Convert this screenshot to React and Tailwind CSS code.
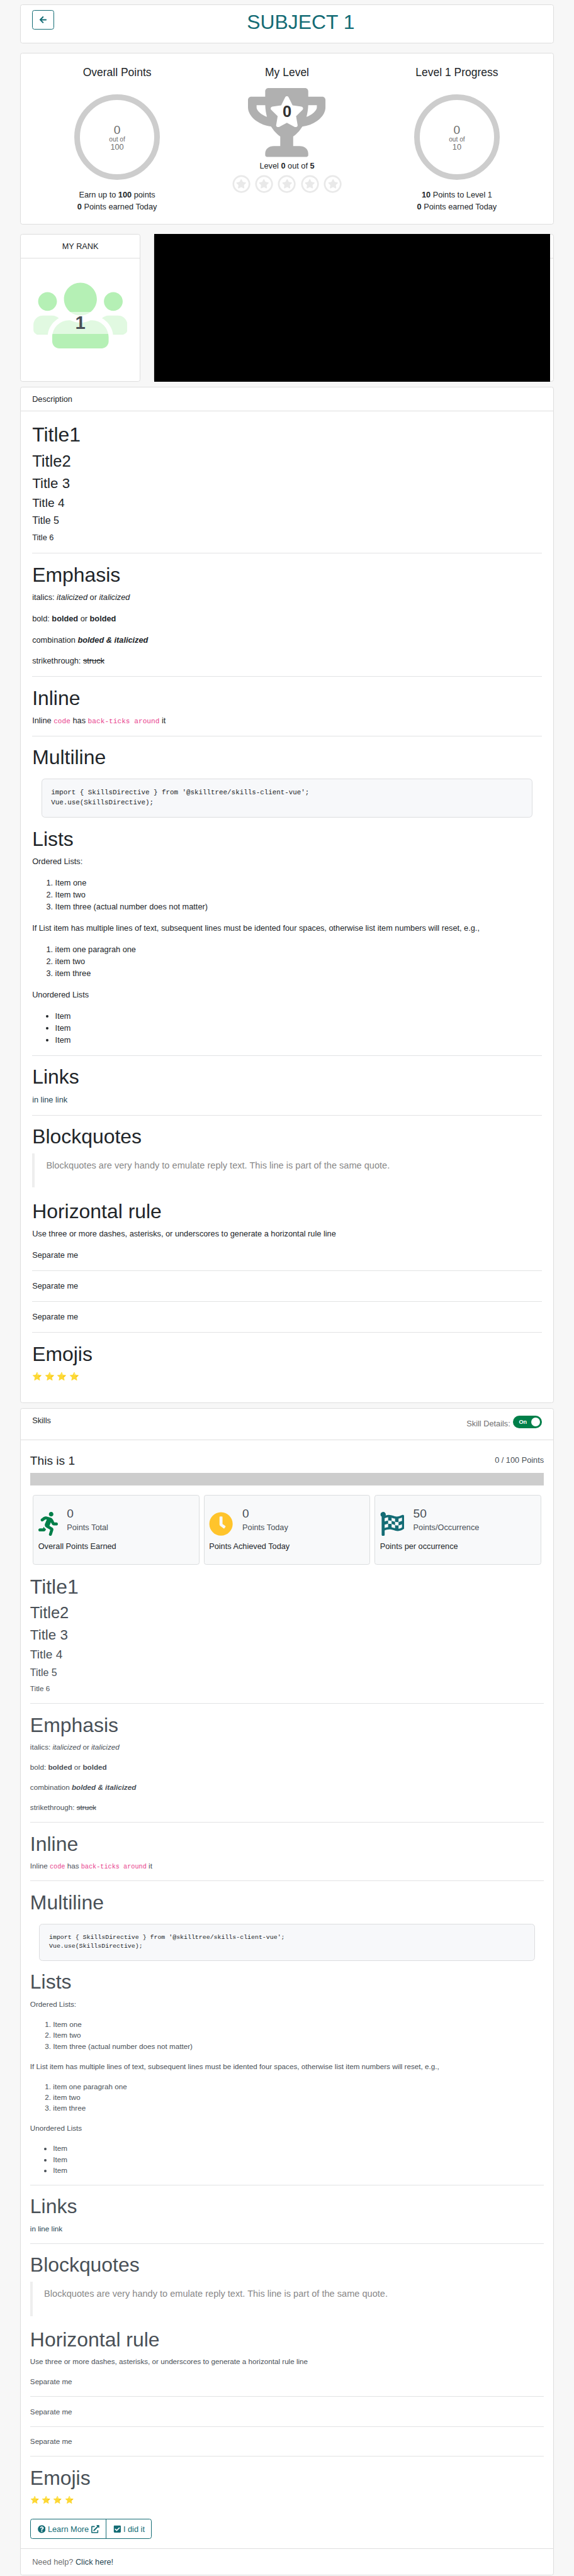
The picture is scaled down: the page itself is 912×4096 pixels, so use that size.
import React from "react";
import {
  FaArrowLeft,
  FaTrophy,
  FaStar,
  FaRegCircle,
  FaUsers,
  FaRunning,
  FaClock,
  FaFlagCheckered,
  FaQuestionCircle,
  FaExternalLinkAlt,
  FaCheckSquare,
} from "react-icons/fa";

const card = "box-border rounded-[4px] border border-[#dedede] bg-white";

function Heading({ children }) {
  return <h1 className="mb-[8px] text-[35px] leading-[42px]">{children}</h1>;
}

function Rule() {
  return <hr className="my-[16px] h-px border-0 bg-[#e2e3e4]" />;
}

function P({ children }) {
  return <p className="mb-[16px]">{children}</p>;
}

function Code({ children }) {
  return (
    <code className="font-['Liberation_Mono',monospace] text-[0.875em] leading-none text-[#e83e8c]">
      {children}
    </code>
  );
}

function Markdown({ small }) {
  return (
    <div
      className={
        small
          ? "text-[12.8px] leading-[19.03px] text-[#495057]"
          : "text-[14px] leading-[21px] text-[#212529]"
      }
    >
      <Heading>Title1</Heading>
      <h2 className="mb-[8px] text-[28px] leading-[33.6px]">Title2</h2>
      <h3 className="mb-[7px] text-[24.5px] leading-[29.4px]">Title 3</h3>
      <h4 className="mb-[7px] text-[21px] leading-[25.2px]">Title 4</h4>
      <h5 className="mb-[8.4px] text-[17.5px] leading-[21px]">Title 5</h5>
      <h6>Title 6</h6>
      <Rule />
      <Heading>Emphasis</Heading>
      <P>
        italics: <em>italicized</em> or <em>italicized</em>
      </P>
      <P>
        bold: <strong>bolded</strong> or <strong>bolded</strong>
      </P>
      <P>
        combination{" "}
        <strong>
          <em>bolded &amp; italicized</em>
        </strong>
      </P>
      <P>
        strikethrough: <del>struck</del>
      </P>
      <Rule />
      <Heading>Inline</Heading>
      <P>
        Inline <Code>code</Code> has <Code>back-ticks around</Code> it
      </P>
      <Rule />
      <Heading>Multiline</Heading>
      <pre className="m-[16px] rounded-[6px] border border-[#dcdddf] bg-[#f7f8fa] px-[16px] py-[15.7px] font-['Liberation_Mono',monospace] text-[0.85em] leading-[1.45] text-[#212529]">
        {"import { SkillsDirective } from '@skilltree/skills-client-vue';\nVue.use(SkillsDirective);"}
      </pre>
      <Heading>Lists</Heading>
      <P>Ordered Lists:</P>
      <ol className="mb-[16px] list-decimal pl-[40px]">
        <li>Item one</li>
        <li>Item two</li>
        <li>Item three (actual number does not matter)</li>
      </ol>
      <P>
        If List item has multiple lines of text, subsequent lines must be
        idented four spaces, otherwise list item numbers will reset, e.g.,
      </P>
      <ol className="mb-[16px] list-decimal pl-[40px]">
        <li>item one paragrah one</li>
        <li>item two</li>
        <li>item three</li>
      </ol>
      <P>Unordered Lists</P>
      <ul className="mb-[16px] list-disc pl-[40px]">
        <li>Item</li>
        <li>Item</li>
        <li>Item</li>
      </ul>
      <Rule />
      <Heading>Links</Heading>
      <P>
        <a className="text-[#264653]">in line link</a>
      </P>
      <Rule />
      <Heading>Blockquotes</Heading>
      <blockquote className="mb-[20px] border-l-[5px] border-[#eeeeee] px-[20px] py-[10px] text-[16px] leading-[24px] text-[#888888]">
        <p className="mb-[16px]">
          Blockquotes are very handy to emulate reply text. This line is part of
          the same quote.
        </p>
      </blockquote>
      <Heading>Horizontal rule</Heading>
      <P>
        Use three or more dashes, asterisks, or underscores to generate a
        horizontal rule line
      </P>
      <P>Separate me</P>
      <Rule />
      <P>Separate me</P>
      <Rule />
      <P>Separate me</P>
      <Rule />
      <Heading>Emojis</Heading>
      <p>⭐ ⭐ ⭐ ⭐</p>
    </div>
  );
}

function Ring({ total }) {
  return (
    <div className="mt-[26px] flex h-[150px] w-[150px] flex-col items-center justify-center rounded-full border-[10px] border-[#cdcdcd] pt-[2px] text-[#6f6f6f]">
      <span className="text-[21px] leading-[21px]">0</span>
      <span className="text-[11.2px] leading-[13px]">out of</span>
      <span className="text-[14px] leading-[14px]">{total}</span>
    </div>
  );
}

function Column({ title, children }) {
  return (
    <div className="flex w-[296px] flex-col items-center">
      <h2 className="text-[19.2px] leading-[23px]">{title}</h2>
      {children}
    </div>
  );
}

function Stat({ icon, value, unit, label }) {
  return (
    <div className="h-[122px] flex-1 rounded-[4px] border border-[#dbdddf] bg-[#f8f9fa] px-[8px] pt-[20px]">
      <div className="flex h-[58px] gap-[16px]">
        <div className="mt-[8px]">{icon}</div>
        <div className="text-[#495057]">
          <div className="text-[21px] leading-[25px]">{value}</div>
          <div>{unit}</div>
        </div>
      </div>
      <div>{label}</div>
    </div>
  );
}

export default function App() {
  return (
    <div className="h-[4096px] w-full overflow-hidden bg-[#f7f7f7]">
      <div className="w-[1000px] px-[35px] pt-[8px] font-['Liberation_Sans',Arial,sans-serif] text-[14px] leading-[21px] text-[#212529] [zoom:0.912]">
        <header className={`${card} flex h-[68px] px-[20px] pt-[8px]`}>
          <button className="mr-[10px] flex h-[35px] w-[38px] items-center justify-center rounded-[4px] border border-[#146c75] text-[#146c75]">
            <FaArrowLeft size={14} />
          </button>
          <h1 className="flex-1 text-center text-[35px] leading-[42px] text-[#146c75]">
            SUBJECT 1
          </h1>
        </header>

        <section className={`${card} mt-[16px] flex h-[300px] px-[20px] pt-[22px]`}>
          <Column title="Overall Points">
            <Ring total="100" />
            <p className="mt-[14.6px]">
              Earn up to <b>100</b> points
            </p>
            <p>
              <b>0</b> Points earned Today
            </p>
          </Column>
          <Column title="My Level">
            <div className="relative mt-[16px] h-[120px] w-[135px] text-[#b0b0b0]">
              <FaTrophy className="h-[120px] w-[135px]" />
              <div className="absolute left-[37px] top-[13.5px] text-white">
                <FaStar className="h-[54px] w-[61px]" />
              </div>
              <div className="absolute inset-x-0 top-[22px] text-center text-[28px] font-bold leading-[36px] text-[#333333]">
                0
              </div>
            </div>
            <p className="mt-[4.6px]">
              Level <b>0</b> out of <b>5</b>
            </p>
            <div className="mt-[5px] flex gap-[8px] text-[#e9e9e9]">
              {[1, 2, 3, 4, 5].map((n) => (
                <div key={n} className="relative h-[32px] w-[32px]">
                  <FaRegCircle className="h-[32px] w-[32px]" />
                  <div className="absolute inset-0 flex items-center justify-center">
                    <FaStar className="h-[16px] w-[18px]" />
                  </div>
                </div>
              ))}
            </div>
          </Column>
          <Column title="Level 1 Progress">
            <Ring total="10" />
            <p className="mt-[14.6px]">
              <b>10</b> Points to Level 1
            </p>
            <p>
              <b>0</b> Points earned Today
            </p>
          </Column>
        </section>

        <div className="mt-[16px] flex h-[258px] justify-between">
          <section className={`${card} w-[210px]`}>
            <h6 className="border-b border-[#dedede] py-[12px] text-center leading-[16.8px]">
              MY RANK
            </h6>
            <div className="relative pt-[34px]">
              <FaUsers className="mx-auto h-[131px] w-[164px] text-[#b5f0b5]" />
              <div className="absolute inset-x-0 top-[93px] bg-white/60 text-center text-[32px] font-bold leading-[38.4px] text-[#495057]">
                1
              </div>
            </div>
          </section>
          <section className={`${card} relative w-[697px]`}>
            <div className="h-[41.8px] border-b border-[#dedede]" />
            <div className="absolute -left-px -top-px h-[258px] w-[690px] bg-black" />
          </section>
        </div>

        <section className={`${card} mt-[8.4px] h-[1772.2px]`}>
          <h6 className="border-b border-[#dedede] px-[20px] py-[12px] leading-[16.8px]">
            Description
          </h6>
          <div className="px-[20px] pt-[20px]">
            <Markdown />
          </div>
        </section>

        <section className={`${card} mt-[8.6px] h-[2035px]`}>
          <div className="flex h-[55.2px] justify-between border-b border-[#dedede] px-[20px] pt-[12px]">
            <h6 className="leading-[16.8px]">Skills</h6>
            <div className="flex items-start gap-[5px]">
              <span className="pt-[3.5px] text-[#6f6f6f]">Skill Details:</span>
              <div className="flex h-[22px] w-[50px] items-center justify-between rounded-full bg-[#007f49] pl-[10px] pr-[3px] text-[10px] font-bold leading-[16px] text-white">
                <span>On</span>
                <span className="h-[16px] w-[16px] rounded-full bg-white" />
              </div>
            </div>
          </div>
          <div className="px-[16.4px] pt-[24px]">
            <div className="flex h-[33px] justify-between">
              <h4 className="text-[21px] leading-[25.2px]">This is 1</h4>
              <span className="text-[#495057]">0 / 100 Points</span>
            </div>
            <div className="h-[22px] bg-[#cdcdcd]" />
            <div className="mb-[16.8px] mt-[16px] flex gap-[8px] px-[5px]">
              <Stat
                icon={<FaRunning className="h-[42px] w-[34px] text-[#007f49]" />}
                value="0"
                unit="Points Total"
                label="Overall Points Earned"
              />
              <Stat
                icon={<FaClock className="h-[42px] w-[42px] text-[#ffc42b]" />}
                value="0"
                unit="Points Today"
                label="Points Achieved Today"
              />
              <Stat
                icon={<FaFlagCheckered className="h-[42px] w-[42px] text-[#146c75]" />}
                value="50"
                unit="Points/Occurrence"
                label="Points per occurrence"
              />
            </div>
            <Markdown small />
            <div className="mt-[24px] flex h-[35px] w-[212px] rounded-[4px] border border-[#146c75] text-[#146c75]">
              <button className="flex w-[132px] items-center justify-center gap-[4px] border-r border-[#146c75]">
                <FaQuestionCircle size={14} />
                Learn More
                <FaExternalLinkAlt size={14} />
              </button>
              <button className="flex flex-1 items-center justify-center gap-[4px]">
                <FaCheckSquare size={14} />
                I did it
              </button>
            </div>
          </div>
          <footer className="mt-[16px] border-t border-[#dedede] px-[20px] pt-[12px] text-[#6f6f6f]">
            Need help? <a className="text-[#264653]">Click here!</a>
          </footer>
        </section>
      </div>
    </div>
  );
}
